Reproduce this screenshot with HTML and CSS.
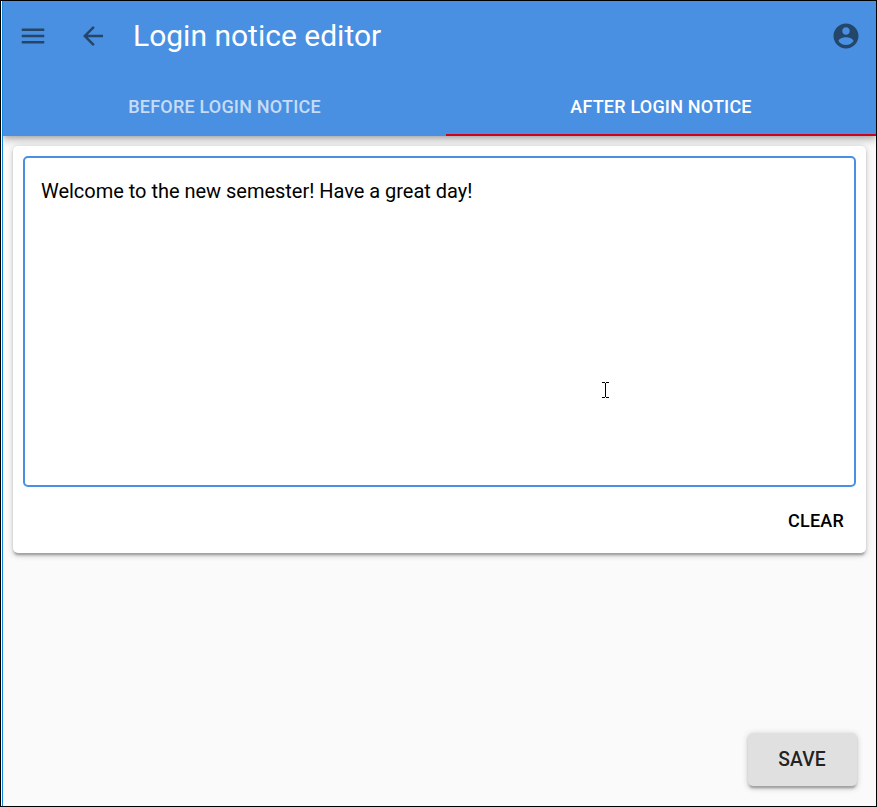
FILE: index.html
```html
<!DOCTYPE html>
<html lang="en">
<head>
<meta charset="utf-8">
<title>Login notice editor</title>
<link rel="stylesheet" href="styles.css">
</head>
<body>
<div class="window">
  <div class="app">
    <header class="app-bar">
      <div class="toolbar">
        <svg class="icon menu" viewBox="0 0 24 24"><path d="M3 18h18v-2H3v2zm0-5h18v-2H3v2zm0-7v2h18V6H3z"/></svg>
        <svg class="icon back" viewBox="0 0 24 24"><path d="M20 11H7.83l5.59-5.59L12 4l-8 8 8 8 1.41-1.41L7.83 13H20v-2z"/></svg>
        <h1 class="title">Login notice editor</h1>
        <svg class="icon account" viewBox="0 0 24 24"><path d="M12 2C6.48 2 2 6.48 2 12s4.48 10 10 10 10-4.48 10-10S17.52 2 12 2zm0 3c1.66 0 3 1.34 3 3s-1.34 3-3 3-3-1.34-3-3 1.34-3 3-3zm0 14.2c-2.5 0-4.71-1.28-6-3.22.03-1.99 4-3.08 6-3.08 1.99 0 5.97 1.09 6 3.08-1.29 1.94-3.5 3.22-6 3.22z"/></svg>
      </div>
      <nav class="tabs">
        <div class="tab">BEFORE LOGIN NOTICE</div>
        <div class="tab selected">AFTER LOGIN NOTICE</div>
      </nav>
    </header>
    <main class="card">
      <div class="field">Welcome to the new semester! Have a great day!</div>
      <div class="actions"><span class="clear">CLEAR</span></div>
    </main>
    <footer class="footer"><div class="save">SAVE</div></footer>
    <svg class="cursor" viewBox="0 0 7 16" shape-rendering="crispEdges"><path d="M0 0h3v1H0zM4 0h3v1H4zM3 1h1v14H3zM0 15h3v1H0zM4 15h3v1H4z"/></svg>
  </div>
</div>
</body>
</html>
```
FILE: styles.css
```css
* { box-sizing: border-box; }
body { margin: 0; font-family: Roboto, "Liberation Sans", sans-serif; }
.window {
  width: 877px;
  height: 807px;
  border: 1px solid #000;
  padding-left: 1px;
  background: #fff;
}
.app {
  position: relative;
  height: 805px;
  border-left: 1px solid #1583d8;
  background: #fafafa;
  overflow: hidden;
  display: flex;
  flex-direction: column;
}
.app-bar {
  height: 135px;
  flex: none;
  background: #4a90e2;
  box-shadow: 0 2.5px 5px -1.25px rgba(0,0,0,.2), 0 5px 6.25px rgba(0,0,0,.14), 0 1.25px 12.5px rgba(0,0,0,.12);
}
.toolbar {
  height: 70px;
  display: flex;
  align-items: center;
  padding: 0 15px;
}
.icon { width: 30px; height: 30px; fill: #234669; flex: none; }
.back { margin-left: 30px; }
.title {
  margin: 0 0 0 25px;
  flex: 1;
  color: #fff;
  font-size: 30px;
  font-weight: 400;
  line-height: 40px;
}
.tabs {
  display: grid;
  grid-template-columns: 443px 1fr;
  height: 65px;
}
.tab {
  display: flex;
  align-items: center;
  justify-content: center;
  padding-top: 9px;
  padding-bottom: 1px;
  border-bottom: 2px solid transparent;
  color: rgba(255,255,255,.7);
  font-size: 18px;
  font-weight: 500;
  letter-spacing: .2px;
}
.tab.selected { color: #fff; border-bottom-color: #d0021b; }
.card {
  margin: 10px 10px 0;
  height: 407px;
  flex: none;
  padding: 10px 10px 0;
  border-radius: 5px;
  background: #fff;
  box-shadow: 0 1.25px 6.25px rgba(0,0,0,.2), 0 2.5px 2.5px rgba(0,0,0,.14), 0 3.75px 1.25px -2.5px rgba(0,0,0,.12);
}
.field {
  height: 331px;
  border: 2px solid #4a90e2;
  border-radius: 5px;
  padding: 21px 16px;
  font-size: 20px;
  line-height: 24px;
  letter-spacing: -.02px;
  color: #000;
}
.actions {
  display: flex;
  justify-content: flex-end;
  padding: 22px 12px 0 0;
}
.clear { font-size: 18px; font-weight: 500; line-height: 24px; letter-spacing: .2px; color: #000; }
.footer {
  margin-top: auto;
  padding: 0 19.5px 20px;
  display: flex;
  justify-content: flex-end;
}
.save {
  width: 109px;
  height: 53px;
  display: flex;
  align-items: center;
  justify-content: center;
  border-radius: 5px;
  background: #e0e0e0;
  color: rgba(0,0,0,.87);
  font-size: 19.3px;
  font-weight: 500;
  letter-spacing: .1px;
  box-shadow: 0 1.25px 6.25px rgba(0,0,0,.2), 0 2.5px 2.5px rgba(0,0,0,.14), 0 3.75px 1.25px -2.5px rgba(0,0,0,.12);
}
.cursor { position: absolute; left: 599px; top: 381px; width: 7px; height: 16px; }
```
